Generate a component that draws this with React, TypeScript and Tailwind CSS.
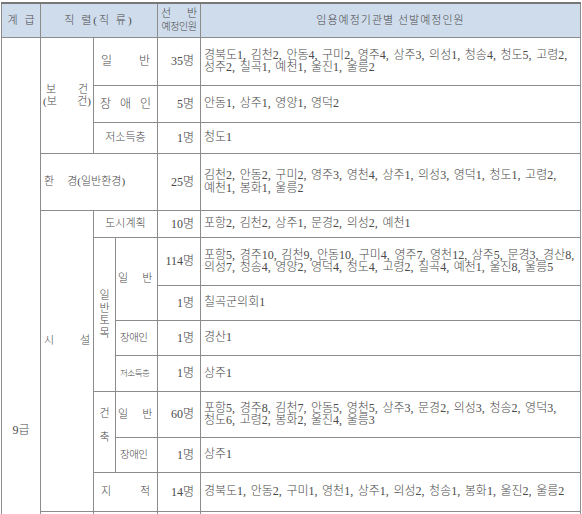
import React from 'react';

const cell = 'border border-[#8c8c8c] p-0';

const Spread = ({ a, b, className = '' }: { a: string; b: string; className?: string }) => (
  <div className={`flex justify-between ${className}`}>
    <span>{a}</span>
    <span>{b}</span>
  </div>
);

const Names = ({ lines }: { lines: string[] }) => (
  <div className="pl-[3px] pr-[2px] text-[12px] leading-[12.5px] [word-spacing:1.6px]">
    {lines.map((l, i) => (
      <div key={i} className="whitespace-nowrap">
        {l}
      </div>
    ))}
  </div>
);

const Count = ({ n }: { n: string }) => (
  <div className="pr-[6px] text-right text-[12px]">{n}</div>
);

export default function App() {
  return (
    <div className="h-[514px] w-[582px] overflow-hidden bg-white pl-[1px] pt-[2px] font-['Liberation_Serif','Noto_Sans_CJK_KR',serif] font-light text-[#4a4a4a]">
      <table className="w-[579px] table-fixed border-collapse border-t-2 border-t-[#777]">
        <colgroup>
          <col className="w-[39px]" />
          <col className="w-[53px]" />
          <col className="w-[22px]" />
          <col className="w-[42px]" />
          <col className="w-[43px]" />
          <col className="w-[380px]" />
        </colgroup>
        <thead>
          <tr className="h-[34px] bg-[#cfdcec] text-[11px]">
            <th className={`${cell} font-light`}>
              <div className="flex justify-center gap-[7px]">
                <span>계</span>
                <span>급</span>
              </div>
            </th>
            <th colSpan={3} className={`${cell} font-light tracking-[2px]`}>
              직 렬(직 류)
            </th>
            <th className={`${cell} font-light leading-[14px]`}>
              <Spread a="선" b="반" className="px-[3px]" />
              <div className="text-[10px] tracking-[-0.5px]">예정인원</div>
            </th>
            <th className={`${cell} font-light tracking-[1px]`}>임용예정기관별 선발예정인원</th>
          </tr>
        </thead>
        <tbody className="text-[12px]">
          <tr className="h-[48px]">
            <td rowSpan={13} className={`${cell} border-b-0 align-top`}>
              <div className="pt-[383px] text-center text-[12px]">9급</div>
            </td>
            <td rowSpan={3} className={cell}>
              <div className="text-[11px] leading-[12px]">
                <Spread a="보" b="건" className="px-[5px]" />
                <Spread a="(보" b="건)" className="px-[2px]" />
              </div>
            </td>
            <td colSpan={2} className={cell}>
              <Spread a="일" b="반" className="px-[7px]" />
            </td>
            <td className={cell}>
              <Count n="35명" />
            </td>
            <td className={cell}>
              <Names
                lines={[
                  '경북도1, 김천2, 안동4, 구미2, 영주4, 상주3, 의성1, 청송4, 청도5, 고령2,',
                  '성주2, 칠곡1, 예천1, 울진1, 울릉2',
                ]}
              />
            </td>
          </tr>
          <tr className="h-[37px]">
            <td colSpan={2} className={cell}>
              <div className="flex justify-center gap-[9px]">
                <span>장</span>
                <span>애</span>
                <span>인</span>
              </div>
            </td>
            <td className={cell}>
              <Count n="5명" />
            </td>
            <td className={cell}>
              <Names lines={['안동1, 상주1, 영양1, 영덕2']} />
            </td>
          </tr>
          <tr className="h-[31px]">
            <td colSpan={2} className={`${cell} text-center text-[11px]`}>
              저소득층
            </td>
            <td className={cell}>
              <Count n="1명" />
            </td>
            <td className={cell}>
              <Names lines={['청도1']} />
            </td>
          </tr>
          <tr className="h-[57px]">
            <td colSpan={3} className={cell}>
              <div className="flex pl-[3px] text-[11px]">
                <span>환</span>
                <span className="ml-[13px]">경(일반환경)</span>
              </div>
            </td>
            <td className={cell}>
              <Count n="25명" />
            </td>
            <td className={cell}>
              <Names
                lines={[
                  '김천2, 안동2, 구미2, 영주3, 영천4, 상주1, 의성3, 영덕1, 청도1, 고령2,',
                  '예천1, 봉화1, 울릉2',
                ]}
              />
            </td>
          </tr>
          <tr className="h-[27px]">
            <td rowSpan={8} className={cell}>
              <Spread a="시" b="설" className="px-[3px] pb-[40px] text-[11px]" />
            </td>
            <td colSpan={2} className={`${cell} text-center text-[11px]`}>
              도시계획
            </td>
            <td className={cell}>
              <Count n="10명" />
            </td>
            <td className={cell}>
              <Names lines={['포항2, 김천2, 상주1, 문경2, 의성2, 예천1']} />
            </td>
          </tr>
          <tr className="h-[48px]">
            <td rowSpan={4} className={cell}>
              <div className="flex flex-col items-center text-[11px] leading-[12.5px]">
                <span>일</span>
                <span>반</span>
                <span>토</span>
                <span>목</span>
              </div>
            </td>
            <td rowSpan={2} className={cell}>
              <div className="flex gap-[14px] pl-[2px] text-[11px]">
                <span>일</span>
                <span>반</span>
              </div>
            </td>
            <td className={cell}>
              <Count n="114명" />
            </td>
            <td className={cell}>
              <Names
                lines={[
                  '포항5, 경주10, 김천9, 안동10, 구미4, 영주7, 영천12, 상주5, 문경3, 경산8,',
                  '의성7, 청송4, 영양2, 영덕4, 청도4, 고령2, 칠곡4, 예천1, 울진8, 울릉5',
                ]}
              />
            </td>
          </tr>
          <tr className="h-[35px]">
            <td className={cell}>
              <Count n="1명" />
            </td>
            <td className={cell}>
              <Names lines={['칠곡군의회1']} />
            </td>
          </tr>
          <tr className="h-[35px]">
            <td className={`${cell} pl-[4px] text-[10.5px] tracking-[-0.5px]`}>장애인</td>
            <td className={cell}>
              <Count n="1명" />
            </td>
            <td className={cell}>
              <Names lines={['경산1']} />
            </td>
          </tr>
          <tr className="h-[36px]">
            <td className={`${cell} pl-[4px] text-[8.5px] tracking-[-0.5px]`}>저소득층</td>
            <td className={cell}>
              <Count n="1명" />
            </td>
            <td className={cell}>
              <Names lines={['상주1']} />
            </td>
          </tr>
          <tr className="h-[46px]">
            <td rowSpan={2} className={cell}>
              <div className="flex flex-col items-center gap-[12px] pb-[14px] text-[11px] leading-[12px]">
                <span>건</span>
                <span>축</span>
              </div>
            </td>
            <td className={cell}>
              <div className="flex gap-[14px] pl-[2px] text-[11px]">
                <span>일</span>
                <span>반</span>
              </div>
            </td>
            <td className={cell}>
              <Count n="60명" />
            </td>
            <td className={cell}>
              <Names
                lines={[
                  '포항5, 경주8, 김천7, 안동5, 영천5, 상주3, 문경2, 의성3, 청송2, 영덕3,',
                  '청도6, 고령2, 봉화2, 울진4, 울릉3',
                ]}
              />
            </td>
          </tr>
          <tr className="h-[35px]">
            <td className={`${cell} pl-[4px] text-[10.5px] tracking-[-0.5px]`}>장애인</td>
            <td className={cell}>
              <Count n="1명" />
            </td>
            <td className={cell}>
              <Names lines={['상주1']} />
            </td>
          </tr>
          <tr className="h-[39px]">
            <td colSpan={2} className={cell}>
              <Spread a="지" b="적" className="px-[7px] text-[11px]" />
            </td>
            <td className={cell}>
              <Count n="14명" />
            </td>
            <td className={cell}>
              <Names
                lines={['경북도1, 안동2, 구미1, 영천1, 상주1, 의성2, 청송1, 봉화1, 울진2, 울릉2']}
              />
            </td>
          </tr>
          <tr className="h-[40px]">
            <td className={cell} />
            <td colSpan={2} className={cell} />
            <td className={cell} />
            <td className={cell} />
          </tr>
        </tbody>
      </table>
    </div>
  );
}
